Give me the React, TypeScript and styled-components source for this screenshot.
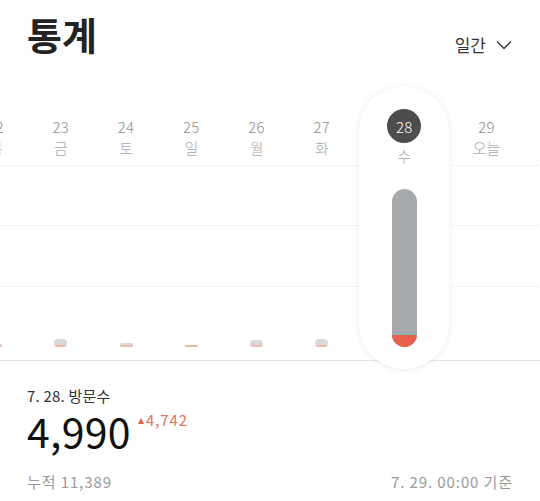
import React from "react"
import styled, { createGlobalStyle } from "styled-components"

interface Day {
	date: number
	label: string
	total: number
	red: number
}

const days: Day[] = [
	{ date: 22, label: "목", total: 3, red: 2 },
	{ date: 23, label: "금", total: 8, red: 2 },
	{ date: 24, label: "토", total: 4, red: 2 },
	{ date: 25, label: "일", total: 2, red: 2 },
	{ date: 26, label: "월", total: 7, red: 2 },
	{ date: 27, label: "화", total: 8, red: 2 },
	{ date: 28, label: "수", total: 158, red: 14 },
	{ date: 29, label: "오늘", total: 0, red: 0 },
]
const selected = 28

export default function App() {
	return (
		<>
			<GlobalStyle />
			<Page>
				<Header>
					<Title>통계</Title>
					<PeriodButton>
						일간
						<svg width="16" height="10" viewBox="0 0 16 10">
							<polyline points="1,1.5 8,8.5 15,1.5" fill="none" stroke="#333" strokeWidth="1.3" />
						</svg>
					</PeriodButton>
				</Header>

				<Chart>
					<Strip>
						{days.map((d) => {
							const active = d.date === selected
							return (
								<Column key={d.date} active={active}>
									<Card active={active}>
										<DateNum active={active}>{d.date}</DateNum>
										<Weekday active={active}>{d.label}</Weekday>
										<BarArea>
											{d.total > 0 && (
												<Bar active={active} style={{ height: d.total }}>
													<Fill active={active} style={{ height: d.red }} />
												</Bar>
											)}
										</BarArea>
									</Card>
								</Column>
							)
						})}
					</Strip>
				</Chart>

				<Stats>
					<StatLabel>7. 28. 방문수</StatLabel>
					<CountRow>
						<Count>4,990</Count>
						<Delta>
							<Arrow />
							4,742
						</Delta>
					</CountRow>
					<Footer>
						<span>누적 11,389</span>
						<span>7. 29. 00:00 기준</span>
					</Footer>
				</Stats>
			</Page>
		</>
	)
}

const GlobalStyle = createGlobalStyle`
	html, body {
		margin: 0;
		padding: 0;
		background: #fff;
	}
	body {
		font-family: "Noto Sans CJK KR", "Noto Sans", sans-serif;
		color: #222;
	}
`

const Page = styled.div`
	width: 540px;
	height: 501px;
	overflow: hidden;
`

const Header = styled.div`
	display: flex;
	justify-content: space-between;
	align-items: flex-end;
	padding: 10px 28px 0 27px;
`

const Title = styled.h1`
	margin: 0;
	font-size: 38px;
	line-height: 48px;
	font-weight: 700;
	color: #222;
`

const PeriodButton = styled.div`
	display: flex;
	align-items: center;
	gap: 10px;
	font-size: 17px;
	line-height: 24px;
	color: #333;
	padding-bottom: 1px;
`

const Chart = styled.div`
	margin-top: 22px;
	height: 295px;
	overflow: hidden;
	background-image: linear-gradient(to right, #e9e9e9 50%, transparent 0),
		linear-gradient(to right, #e9e9e9 50%, transparent 0), linear-gradient(to right, #e9e9e9 50%, transparent 0),
		linear-gradient(#e4e4e4, #e4e4e4);
	background-size: 4px 1px, 4px 1px, 4px 1px, 100% 1px;
	background-position: 0 85px, 0 145px, 0 206px, 0 280px;
	background-repeat: repeat-x;
`

const Strip = styled.div`
	display: flex;
	height: 100%;
	margin-left: -37px;
`

const Column = styled.div<{ active: boolean }>`
	flex: 0 0 ${(p) => (p.active ? 99.5 : 65.25)}px;
	display: flex;
	justify-content: center;
`

const Card = styled.div<{ active: boolean }>`
	width: ${(p) => (p.active ? "90px" : "100%")};
	height: 283px;
	margin-top: 6px;
	border-radius: 45px;
	background: ${(p) => (p.active ? "#fff" : "transparent")};
	box-shadow: ${(p) => (p.active ? "0 1px 6px rgba(0, 0, 0, 0.09)" : "none")};
	display: flex;
	flex-direction: column;
	align-items: center;
	padding-top: 23px;
	box-sizing: border-box;
`

const DateNum = styled.div<{ active: boolean }>`
	width: 34px;
	height: 34px;
	border-radius: 50%;
	display: flex;
	align-items: center;
	justify-content: center;
	font-size: 15px;
	font-weight: 300;
	letter-spacing: 0.3px;
	background: ${(p) => (p.active ? "#4d4d4d" : "transparent")};
	color: ${(p) => (p.active ? "#fff" : "#8c8c8c")};
`

const Weekday = styled.div<{ active: boolean }>`
	margin-top: ${(p) => (p.active ? 3 : -5)}px;
	font-size: 15px;
	line-height: 20px;
	font-weight: 300;
	color: #aaa;
	white-space: nowrap;
`

const BarArea = styled.div`
	flex: 1;
	display: flex;
	align-items: flex-end;
	justify-content: center;
	padding-bottom: 22px;
`

const Bar = styled.div<{ active: boolean }>`
	width: ${(p) => (p.active ? 25 : 13)}px;
	border-radius: ${(p) => (p.active ? 12.5 : 5)}px;
	background: #a7aaad;
	opacity: ${(p) => (p.active ? 1 : 0.45)};
	overflow: hidden;
	display: flex;
	flex-direction: column;
	justify-content: flex-end;
`

const Fill = styled.div<{ active: boolean }>`
	background: #e9604c;
	border-top: ${(p) => (p.active ? "2px solid #8fb3ad" : "none")};
	box-sizing: border-box;
`

const Stats = styled.div`
	padding: 11px 27px 0 27px;
`

const StatLabel = styled.div`
	font-size: 15px;
	line-height: 20px;
	letter-spacing: 0.2px;
	color: #333;
`

const CountRow = styled.div`
	display: flex;
	align-items: flex-start;
	margin-top: 1px;
`

const Count = styled.div`
	font-size: 41px;
	line-height: 46px;
	letter-spacing: 0.3px;
	color: #111;
`

const Delta = styled.div`
	display: flex;
	align-items: center;
	gap: 2px;
	margin: 3px 0 0 7px;
	font-size: 15px;
	line-height: 20px;
	letter-spacing: 0.9px;
	color: #e5705f;
`

const Arrow = styled.span`
	width: 0;
	height: 0;
	border-left: 3.5px solid transparent;
	border-right: 3.5px solid transparent;
	border-bottom: 6px solid #e5604c;
	margin-top: 1px;
`

const Footer = styled.div`
	display: flex;
	justify-content: space-between;
	margin-top: 19px;
	font-size: 15px;
	line-height: 20px;
	letter-spacing: 0.9px;
	color: #999;
`
